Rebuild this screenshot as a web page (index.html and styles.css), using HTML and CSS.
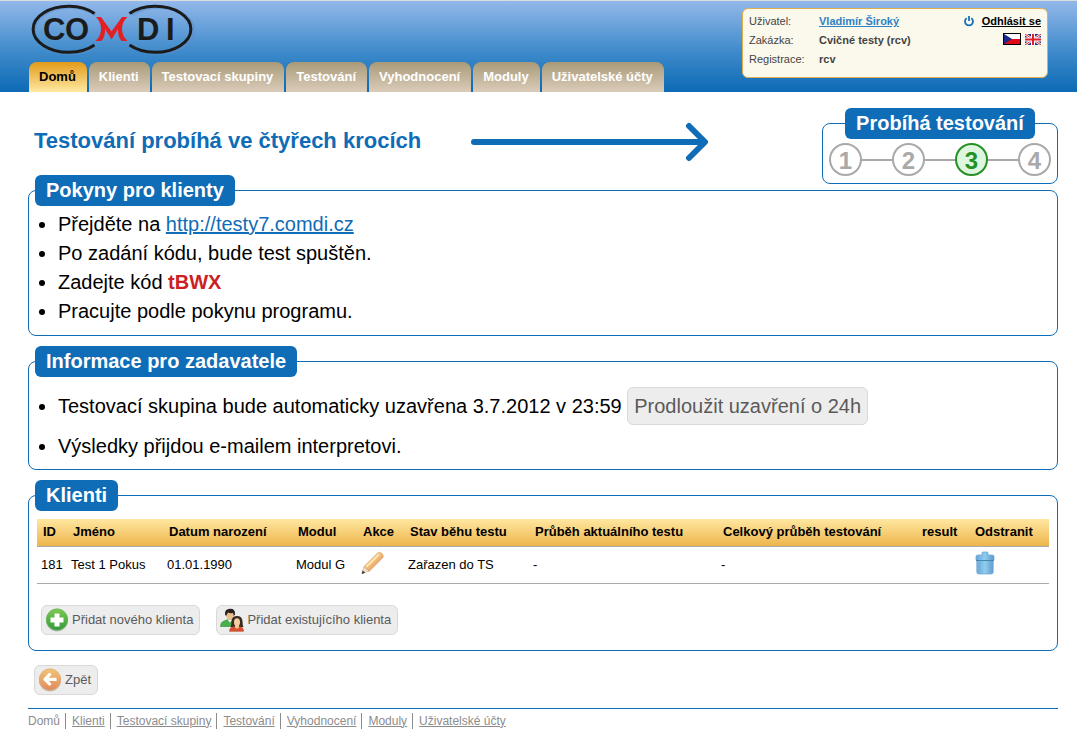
FILE: index.html
```html
<!DOCTYPE html>
<html lang="cs">
<head>
<meta charset="utf-8">
<title>COMDI – Testování</title>
<link rel="stylesheet" href="styles.css">
</head>
<body>
<header class="top">
  <div class="brand">
    <svg class="logo" width="166" height="52" viewBox="0 0 166 52" role="img" aria-label="COMDI">
      <g fill="none" stroke="#5f8fca" stroke-width="3" transform="translate(2 2)" opacity=".5">
        <path d="M65 9A35.500 23 0 1 0 65 40"/>
        <path d="M101 9A35.500 23 0 1 1 101 40"/>
      </g>
      <g fill="none" stroke="#1b1b1b" stroke-width="3">
        <path d="M65.500 9.500A35.500 23 0 1 0 65.500 41"/>
        <path d="M100.500 9.500A35.500 23 0 1 1 100.500 41"/>
      </g>
      <g class="logo-text"><text x="14" y="36">C</text><text x="36" y="36">O</text><text x="108" y="36">D</text><text x="137" y="36">I</text></g>
      <path fill="#e11f24" d="M67 13H72L82.500 27.500 93 13H98.500Q93 18 93 25T98.500 37H92.500Q88.500 32 89 25L82.500 35.500 76 25Q76.500 32 72.500 37H66.500Q72 32 72 25T67 13Z"/>
    </svg>
    <nav class="tabs">
      <a class="tab tab-active" href="#">Domů</a>
      <a class="tab" href="#">Klienti</a>
      <a class="tab" href="#">Testovací skupiny</a>
      <a class="tab" href="#">Testování</a>
      <a class="tab" href="#">Vyhodnocení</a>
      <a class="tab" href="#">Moduly</a>
      <a class="tab" href="#">Uživatelské účty</a>
    </nav>
  </div>
  <div class="user">
    <dl class="user-info">
      <dt>Uživatel:</dt><dd><a class="user-link" href="#">Vladimír Široký</a></dd>
      <dt>Zakázka:</dt><dd>Cvičné testy (rcv)</dd>
      <dt>Registrace:</dt><dd>rcv</dd>
    </dl>
    <div class="session">
      <div class="logout">
        <svg width="10" height="11" viewBox="0 0 10 11" fill="none" stroke="#1673b9" stroke-width="1.800" aria-hidden="true"><path d="M2.700 2.200a4 4 0 1 0 4.600 0M5 0v5"/></svg>
        <a href="#">Odhlásit se</a>
      </div>
      <div class="flags">
        <a href="#" aria-label="Čeština"><svg width="18" height="12" viewBox="0 0 18 12"><path fill="#000" d="M0 0h18v12H0z"/><path fill="#fff" d="M1 1h16v5H1z"/><path fill="#e00a14" d="M1 6h16v5H1z"/><path fill="#1a2a8c" d="M1 1l8 5-8 5z"/></svg></a>
        <a href="#" aria-label="English"><svg width="16" height="11" viewBox="0 0 16 11"><path fill="#26348b" d="M0 0h16v11H0z"/><path stroke="#fff" stroke-width="2.400" d="M0 0l16 11M16 0L0 11"/><path stroke="#e0202c" d="M0 0l16 11M16 0L0 11"/><path stroke="#fff" stroke-width="4" d="M8 0v11M0 5.500h16"/><path stroke="#e0202c" stroke-width="2" d="M8 0v11M0 5.500h16"/></svg></a>
      </div>
    </div>
  </div>
</header>

<main class="page">
  <div class="intro">
    <h1 class="title">Testování probíhá ve čtyřech krocích</h1>
    <svg class="arrow" width="238" height="40" viewBox="0 0 238 40" fill="none" stroke="#0f6cb6" stroke-width="6" stroke-linecap="round" stroke-linejoin="round" aria-hidden="true"><path d="M3 20H233M218 4l16 16-16 16"/></svg>
    <fieldset class="box steps">
      <legend class="box-title">Probíhá testování</legend>
      <ol class="step-list">
        <li class="step">1</li>
        <li class="step">2</li>
        <li class="step step-active">3</li>
        <li class="step">4</li>
      </ol>
    </fieldset>
  </div>

  <fieldset class="box">
    <legend class="box-title">Pokyny pro klienty</legend>
    <ul class="notes">
      <li>Přejděte na <a class="link" href="#">http://testy7.comdi.cz</a></li>
      <li>Po zadání kódu, bude test spuštěn.</li>
      <li>Zadejte kód <strong class="code">tBWX</strong></li>
      <li>Pracujte podle pokynu programu.</li>
    </ul>
  </fieldset>

  <fieldset class="box">
    <legend class="box-title">Informace pro zadavatele</legend>
    <ul class="notes notes-wide">
      <li>Testovací skupina bude automaticky uzavřena 3.7.2012 v 23:59 <button class="btn btn-large" type="button">Prodloužit uzavření o 24h</button></li>
      <li>Výsledky přijdou e-mailem interpretovi.</li>
    </ul>
  </fieldset>

  <fieldset class="box clients">
    <legend class="box-title">Klienti</legend>
    <table class="grid">
      <colgroup><col class="c-id"><col class="c-name"><col class="c-born"><col class="c-mod"><col class="c-act"><col class="c-state"><col class="c-cur"><col class="c-all"><col class="c-res"><col class="c-del"></colgroup>
      <thead>
        <tr><th>ID</th><th>Jméno</th><th>Datum narození</th><th>Modul</th><th>Akce</th><th>Stav běhu testu</th><th>Průběh aktuálního testu</th><th>Celkový průběh testování</th><th>result</th><th>Odstranit</th></tr>
      </thead>
      <tbody>
        <tr>
          <td>181</td><td>Test 1 Pokus</td><td>01.01.1990</td><td>Modul G</td>
          <td><button class="icon-btn" type="button" aria-label="Upravit"><svg width="24" height="24" viewBox="0 0 24 24">
            <defs><linearGradient id="wood" x1="0" y1="0" x2="1" y2="1"><stop offset=".25" stop-color="#fbdc9a"/><stop offset=".5" stop-color="#f3bd78"/><stop offset=".75" stop-color="#dd9163"/></linearGradient></defs>
            <path fill="#f6dfc6" stroke="#c9a78c" stroke-width=".6" d="M1 22.500L3 15.500 8 20Z"/><path fill="#333" d="M.8 23l.8-3.500 2.600 2.200Z"/>
            <path fill="url(#wood)" stroke="#cf9a66" stroke-width=".6" d="M3 15.500L16.500 2Q18.500 .3 20.800 2.300T22 6.500L8 20.500Q7.500 18 5.500 18 5 16 3 15.500Z"/>
            <path stroke="#fff0c4" stroke-width="1.500" fill="none" d="M5.500 15.700L18 3.500"/></svg></button></td>
          <td>Zařazen do TS</td><td>-</td><td>-</td><td></td>
          <td><button class="icon-btn icon-del" type="button" aria-label="Odstranit"><svg width="20" height="24" viewBox="0 0 20 24">
            <defs><linearGradient id="can"><stop offset="0" stop-color="#6ba6dc"/><stop offset=".5" stop-color="#8fcdec"/><stop offset="1" stop-color="#5e97cf"/></linearGradient></defs>
            <path fill="url(#can)" stroke="#6aa3d0" stroke-width=".7" d="M7 4V1.800Q7 1 8 1h4q1 0 1 .8V4h4q2 0 2 1.500V9h-.800V21q0 2-2 2H3.800q-2 0-2-2V9H1V5.500Q1 4 3 4Z"/>
            <path stroke="#4687b2" d="M1 9.500h18"/><path stroke="#74aedd" d="M5 11v11M15 11v11"/></svg></button></td>
        </tr>
      </tbody>
    </table>
    <div class="actions">
      <button class="btn" type="button"><svg width="24" height="24" viewBox="0 0 24 24" aria-hidden="true">
        <defs><linearGradient id="green" x2="0" y2="1"><stop offset="0" stop-color="#7fc954"/><stop offset="1" stop-color="#2f9a3a"/></linearGradient></defs>
        <circle cx="12" cy="12.500" r="11" fill="#b9bdb9"/><circle cx="12" cy="11.500" r="10.700" fill="url(#green)" stroke="#5ab04a" stroke-width=".6"/><path fill="#fff" d="M9.500 5.500h5v4h4v5h-4v4h-5v-4h-4v-5h4z"/></svg>Přidat nového klienta</button>
      <button class="btn" type="button"><svg width="24" height="24" viewBox="0 0 24 24" aria-hidden="true">
        <path fill="#49b04a" stroke="#358c38" stroke-width=".6" d="M.5 18.500q0-4.500 3.500-5.500l4-1.500h4l5 2v5z"/><path fill="#fff" d="M7.500 11.500l2.500 3 2.500-3z"/>
        <ellipse cx="10" cy="7" rx="4" ry="5" fill="#e9bf8b"/><path fill="#29221f" d="M5 6.500Q4.500 1 10 .8T15 6.500L13.800 8 13 5Q10 5.500 8 4.500L6 8Z"/>
        <path fill="#3b2b25" d="M10.500 19q1-2 1-6 .5-5 5.500-5t5.500 5q0 4 1 6z"/><path fill="#d9512f" stroke="#b83f23" stroke-width=".6" d="M9.500 23.300q0-4 4-4.600h6.500q3.500.6 3.500 4.600z"/>
        <path fill="#efc595" d="M15 16h4v3.500l-2 1.500-2-1.500z"/><ellipse cx="17" cy="14.300" rx="3" ry="4" fill="#f3cca0"/></svg>Přidat existujícího klienta</button>
    </div>
  </fieldset>

  <div class="back">
    <button class="btn" type="button"><svg width="24" height="24" viewBox="0 0 24 24" aria-hidden="true">
      <defs><linearGradient id="amber" x2="0" y2="1"><stop offset="0" stop-color="#f2c574"/><stop offset="1" stop-color="#e08a5b"/></linearGradient></defs>
      <circle cx="12" cy="12.500" r="11" fill="#c7bfb8"/><circle cx="12" cy="11.500" r="10.700" fill="url(#amber)" stroke="#dfa267" stroke-width=".6"/><path fill="none" stroke="#fff" stroke-width="3.200" stroke-linejoin="round" d="M12.500 5.500L7 11.300l5.500 5.700M7 11.300h11.500"/></svg>Zpět</button>
  </div>
</main>

<footer class="footer">
  <span class="crumb">Domů</span>
  <span class="crumb"><a href="#">Klienti</a></span>
  <span class="crumb"><a href="#">Testovací skupiny</a></span>
  <span class="crumb"><a href="#">Testování</a></span>
  <span class="crumb"><a href="#">Vyhodnocení</a></span>
  <span class="crumb"><a href="#">Moduly</a></span>
  <span class="crumb"><a href="#">Uživatelské účty</a></span>
</footer>
</body>
</html>
```
FILE: styles.css
```css
* { box-sizing: border-box; }
body { margin: 0; background: #fff; color: #000; font: 13px/16px "Liberation Sans", Arial, sans-serif; }
svg { display: block; flex: none; }

.top { display: flex; justify-content: space-between; align-items: flex-start; padding: 0 29px; border-top: 1px solid #dcdcdc; background: linear-gradient(#93b8ea, #3f8bcb 55%, #0d6ab5); }
.brand { display: flex; flex-direction: column; gap: 6px; padding-top: 3px; }
.logo-text { font: bold 31px "Liberation Sans", Arial, sans-serif; fill: #1b1b1b; }
.tabs { display: flex; gap: 2px; }
.tab { padding: 0 11px 0 10px; border-radius: 8px 8px 0 0; background: linear-gradient(#a89a78, #dbccba); color: #fff; font-weight: bold; line-height: 30px; text-decoration: none; white-space: nowrap; }
.tab-active { background: linear-gradient(#e29a18, #ffe9a3); color: #000; }

.user { display: flex; justify-content: space-between; width: 306px; min-height: 70px; margin-top: 7px; padding: 3px 6px; border: 1px solid #e0ae4c; border-radius: 6px; background: #fbf8ec; color: #444; font-size: 11px; line-height: 19px; }
.user-info { display: grid; grid-template-columns: 70px auto; align-content: start; margin: 0; }
.user-info dd { margin: 0; font-weight: bold; }
.user-link { color: #2f82c4; }
.session { display: flex; flex-direction: column; align-items: flex-end; }
.logout { display: flex; align-items: center; gap: 8px; }
.logout a { color: #000; font-weight: bold; }
.flags { display: flex; align-items: center; gap: 4px; padding-top: 2px; }

.page { display: flex; flex-direction: column; gap: 10px; padding: 16px 19px 12px 28px; }
.intro { display: flex; align-items: flex-start; justify-content: space-between; margin-bottom: -19px; padding-left: 6px; }
.title { margin: 0; color: #0f6cb6; font-size: 22px; line-height: 66px; }
.arrow { margin: 14px 64px 0 0; }

.box { min-width: 0; margin: 0; padding: 3px 8px 8px; border: 1px solid #0f6cb6; border-radius: 8px; }
.box-title { margin-left: -2px; padding: 0 11px; border-radius: 6px; background: #0f6cb6; color: #fff; font-size: 20px; font-weight: bold; line-height: 31px; }
.steps { width: 236px; padding: 4px 6px 7px; }
.steps .box-title { margin: 0 auto; }
.step-list { display: flex; justify-content: space-between; margin: 0; padding: 0; list-style: none; background: linear-gradient(#a9a9a9, #a9a9a9) center / 100% 2px no-repeat; }
.step { width: 33px; height: 33px; border: 2px solid #a9a9a9; border-radius: 50%; background: #fff; color: #a9a9a9; font-size: 24px; font-weight: bold; line-height: 31px; text-align: center; }
.step-active { border-color: #259125; background: #def5de; color: #259125; }

.notes { margin: 0; padding: 1px 0 1px 21px; font-size: 20px; line-height: 29px; }
.notes-wide { padding-top: 7px; padding-bottom: 0; }
.notes-wide li + li { padding-top: 7px; }
.link { color: #0f6cb6; }
.code { color: #cc1f24; }

.btn { display: inline-flex; align-items: center; gap: 3px; height: 30px; padding: 0 6px 0 3px; border: 1px solid #d9d9d9; border-radius: 6px; background: #ededed; color: #5a5a5a; font: inherit; white-space: nowrap; }
.btn-large { height: 38px; padding: 0 6px; }

.grid { width: 100%; border-collapse: collapse; table-layout: fixed; }
.clients { padding: 8px 8px 15px; }
.c-id { width: 30px; } .c-name { width: 96px; } .c-born { width: 129px; } .c-mod { width: 65px; } .c-act { width: 47px; }
.c-state { width: 125px; } .c-cur { width: 188px; } .c-all { width: 199px; } .c-res { width: 53px; } .c-del { width: 80px; }
.grid thead { background: linear-gradient(#ffe7a0, #edb54c); }
.grid th { height: 27px; padding: 0 0 0 6px; text-align: left; white-space: nowrap; }
.grid td { height: 37px; padding: 0 0 0 4px; white-space: nowrap; }
.grid tr { border-bottom: 1px solid #aaa; }
.icon-btn { display: block; margin-top: -4px; padding: 0; border: 0; background: none; }
.icon-del { margin-left: 2px; }
.actions { display: flex; gap: 16px; padding: 21px 4px 0; }
.back { padding: 4px 6px 0; }

.footer { display: flex; margin: 0 19px 0 28px; padding-top: 4px; border-top: 1px solid #0f6cb6; color: #8c8c8c; font-size: 12px; }
.footer a { color: inherit; }
.crumb { padding-right: 5px; }
.crumb + .crumb { padding-left: 6px; border-left: 1px solid #8c8c8c; }
```
